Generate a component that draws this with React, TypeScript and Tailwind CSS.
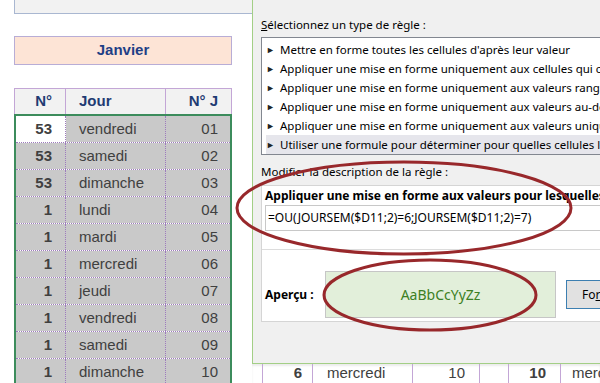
import React from "react";

const rows: [string, string, string][] = [
  ["53", "vendredi", "01"],
  ["53", "samedi", "02"],
  ["53", "dimanche", "03"],
  ["1", "lundi", "04"],
  ["1", "mardi", "05"],
  ["1", "mercredi", "06"],
  ["1", "jeudi", "07"],
  ["1", "vendredi", "08"],
  ["1", "samedi", "09"],
  ["1", "dimanche", "10"],
];

const ruleTypes = [
  "Mettre en forme toutes les cellules d'après leur valeur",
  "Appliquer une mise en forme uniquement aux cellules qui contiennent",
  "Appliquer une mise en forme uniquement aux valeurs rangées parmi les premières ou les dernières valeurs",
  "Appliquer une mise en forme uniquement aux valeurs au-dessus ou en dessous de la moyenne",
  "Appliquer une mise en forme uniquement aux valeurs uniques ou aux doublons",
  "Utiliser une formule pour déterminer pour quelles cellules le format sera appliqué",
];

const sheetFont = { fontFamily: '"Liberation Sans", Arial, sans-serif' };
const uiFont = { fontFamily: '"Noto Sans", "Liberation Sans", sans-serif' };

const Sheet = () => (
  <div className="w-[252px] shrink-0 bg-white" style={sheetFont}>
    <div className="ml-[14px] h-[14px] bg-[#f2f2f2] border-l border-b border-[#a9b7d1]" />

    <div className="ml-[14px] mt-[22px] w-[218px] h-[29px] bg-[#fde4d6] border border-[#b8add6] flex items-center justify-center text-[15px] font-bold text-[#1f3f86]">
      Janvier
    </div>

    <div className="ml-[14px] mt-[23px] w-[218px] h-[26px] bg-[#f2f2f2] border border-b-0 border-[#c3a6d6] flex text-[15px] font-bold text-[#1f3b73]">
      <div className="w-[51px] border-r border-[#c3a6d6] flex items-center justify-end pr-[13px]">N°</div>
      <div className="w-[100px] border-r border-[#c3a6d6] flex items-center pl-[13px]">Jour</div>
      <div className="flex-1 flex items-center justify-end pr-[13px]">N° J</div>
    </div>

    <div className="ml-[14px] w-[218px] border-2 border-[#3c8c5c] border-b-0">
      {rows.map(([n, jour, j], i) => (
        <div key={i} className="h-[27px] flex border-b border-dotted border-[#9d7bbd] text-[15px] text-[#404040]">
          <div
            className={`w-[50px] border-r border-dotted border-[#9d7bbd] flex items-center justify-end pr-[13px] font-bold ${
              i === 0 ? "bg-white" : "bg-[#c9c9c9]"
            }`}
          >
            {n}
          </div>
          <div className="w-[100px] border-r border-dotted border-[#9d7bbd] bg-[#c9c9c9] flex items-center pl-[13px]">
            {jour}
          </div>
          <div className="flex-1 bg-[#c9c9c9] flex items-center justify-end pr-[12px]">{j}</div>
        </div>
      ))}
    </div>
  </div>
);

const Dialog = () => (
  <div className="h-[364px] bg-[#f0f0f0] border-l border-b border-[#a3cf86] pl-[8px] pt-[16px] overflow-hidden text-[11.5px] text-black" style={uiFont}>
    <div className="h-[18px] leading-[18px] whitespace-nowrap">
      <span className="underline">S</span>électionnez un type de règle :
    </div>
    <div className="mt-[3px] h-[118px] bg-white border border-r-0 border-[#828790] pt-[2px] pl-[4px]">
      {ruleTypes.map((t, i) => (
        <div
          key={i}
          className={`h-[19px] flex items-center whitespace-nowrap ${i === 5 ? "bg-[#e6e6ec]" : ""}`}
        >
          <span className="w-[14px] shrink-0 text-[9px] leading-none text-[#222]">►</span>
          <span>{t}</span>
        </div>
      ))}
    </div>

    <div className="mt-[8px] h-[18px] leading-[18px] whitespace-nowrap">
      Modifier la description de la règle :
    </div>
    <div className="mt-[4px] h-[137px] bg-white border border-r-0 border-[#d5d5d5] flex flex-col">
      <div className="h-[64px] pl-[3px] pt-[2px] border-b border-[#dcdcdc]">
        <div className="h-[16px] leading-[16px] font-bold text-[12px] whitespace-nowrap">
          Appliquer une mise en forme aux valeurs pour lesquelles cette formule est vraie :
        </div>
        <div className="mt-[1px] h-[26px] border border-r-0 border-[#c8c8c8] bg-white flex items-center pl-[2px] text-[12px] whitespace-nowrap">
          =OU(JOURSEM($D11;2)=6;JOURSEM($D11;2)=7)
        </div>
      </div>
      <div className="flex items-center pt-[21px] pl-[3px]">
        <div className="w-[60px] shrink-0 font-bold text-[12px] whitespace-nowrap">Aperçu :</div>
        <div className="w-[231px] shrink-0 h-[47px] bg-[#e2efda] border border-[#c6c6c6] flex items-center justify-center text-[14px] text-[#3d7f24]">
          AaBbCcYyZz
        </div>
        <div className="ml-[10px] h-[29px] w-[90px] shrink-0 bg-[#e1e1e1] border border-[#3c7fb1] flex items-center pl-[15px] text-[12px] whitespace-nowrap">
          Fo<span className="underline">r</span>mat...
        </div>
      </div>
    </div>
  </div>
);

const BottomRow = () => (
  <div className="h-[19px] flex bg-white text-[15px] text-[#404040] shadow-[inset_0_2px_2px_rgba(0,0,0,0.08)]" style={sheetFont}>
    <div className="w-[10px] shrink-0" />
    <div className="w-[50px] shrink-0 border-l border-[#c3a6d6] flex items-center justify-end pr-[10px] font-bold">6</div>
    <div className="w-[100px] shrink-0 border-l border-[#c3a6d6] flex items-center pl-[14px]">mercredi</div>
    <div className="w-[67px] shrink-0 border-l border-[#c3a6d6] flex items-center justify-end pr-[14px]">10</div>
    <div className="w-[29px] shrink-0 border-l border-[#c3a6d6]" />
    <div className="w-[52px] shrink-0 border-l border-[#c3a6d6] flex items-center justify-end pr-[14px] font-bold">10</div>
    <div className="w-[100px] shrink-0 border-l border-[#c3a6d6] flex items-center pl-[11px]">mercredi</div>
  </div>
);

export default function App() {
  return (
    <div className="relative w-[600px] h-[383px] overflow-hidden bg-white flex">
      <Sheet />
      <div className="flex-1 min-w-0 flex flex-col overflow-hidden">
        <Dialog />
        <BottomRow />
      </div>
      <svg className="absolute inset-0 pointer-events-none" width="600" height="383">
        <ellipse cx="404" cy="208" rx="167" ry="46" fill="none" stroke="#98282b" strokeWidth="3" />
        <ellipse cx="430" cy="295" rx="106" ry="35" fill="none" stroke="#98282b" strokeWidth="3" />
      </svg>
    </div>
  );
}
